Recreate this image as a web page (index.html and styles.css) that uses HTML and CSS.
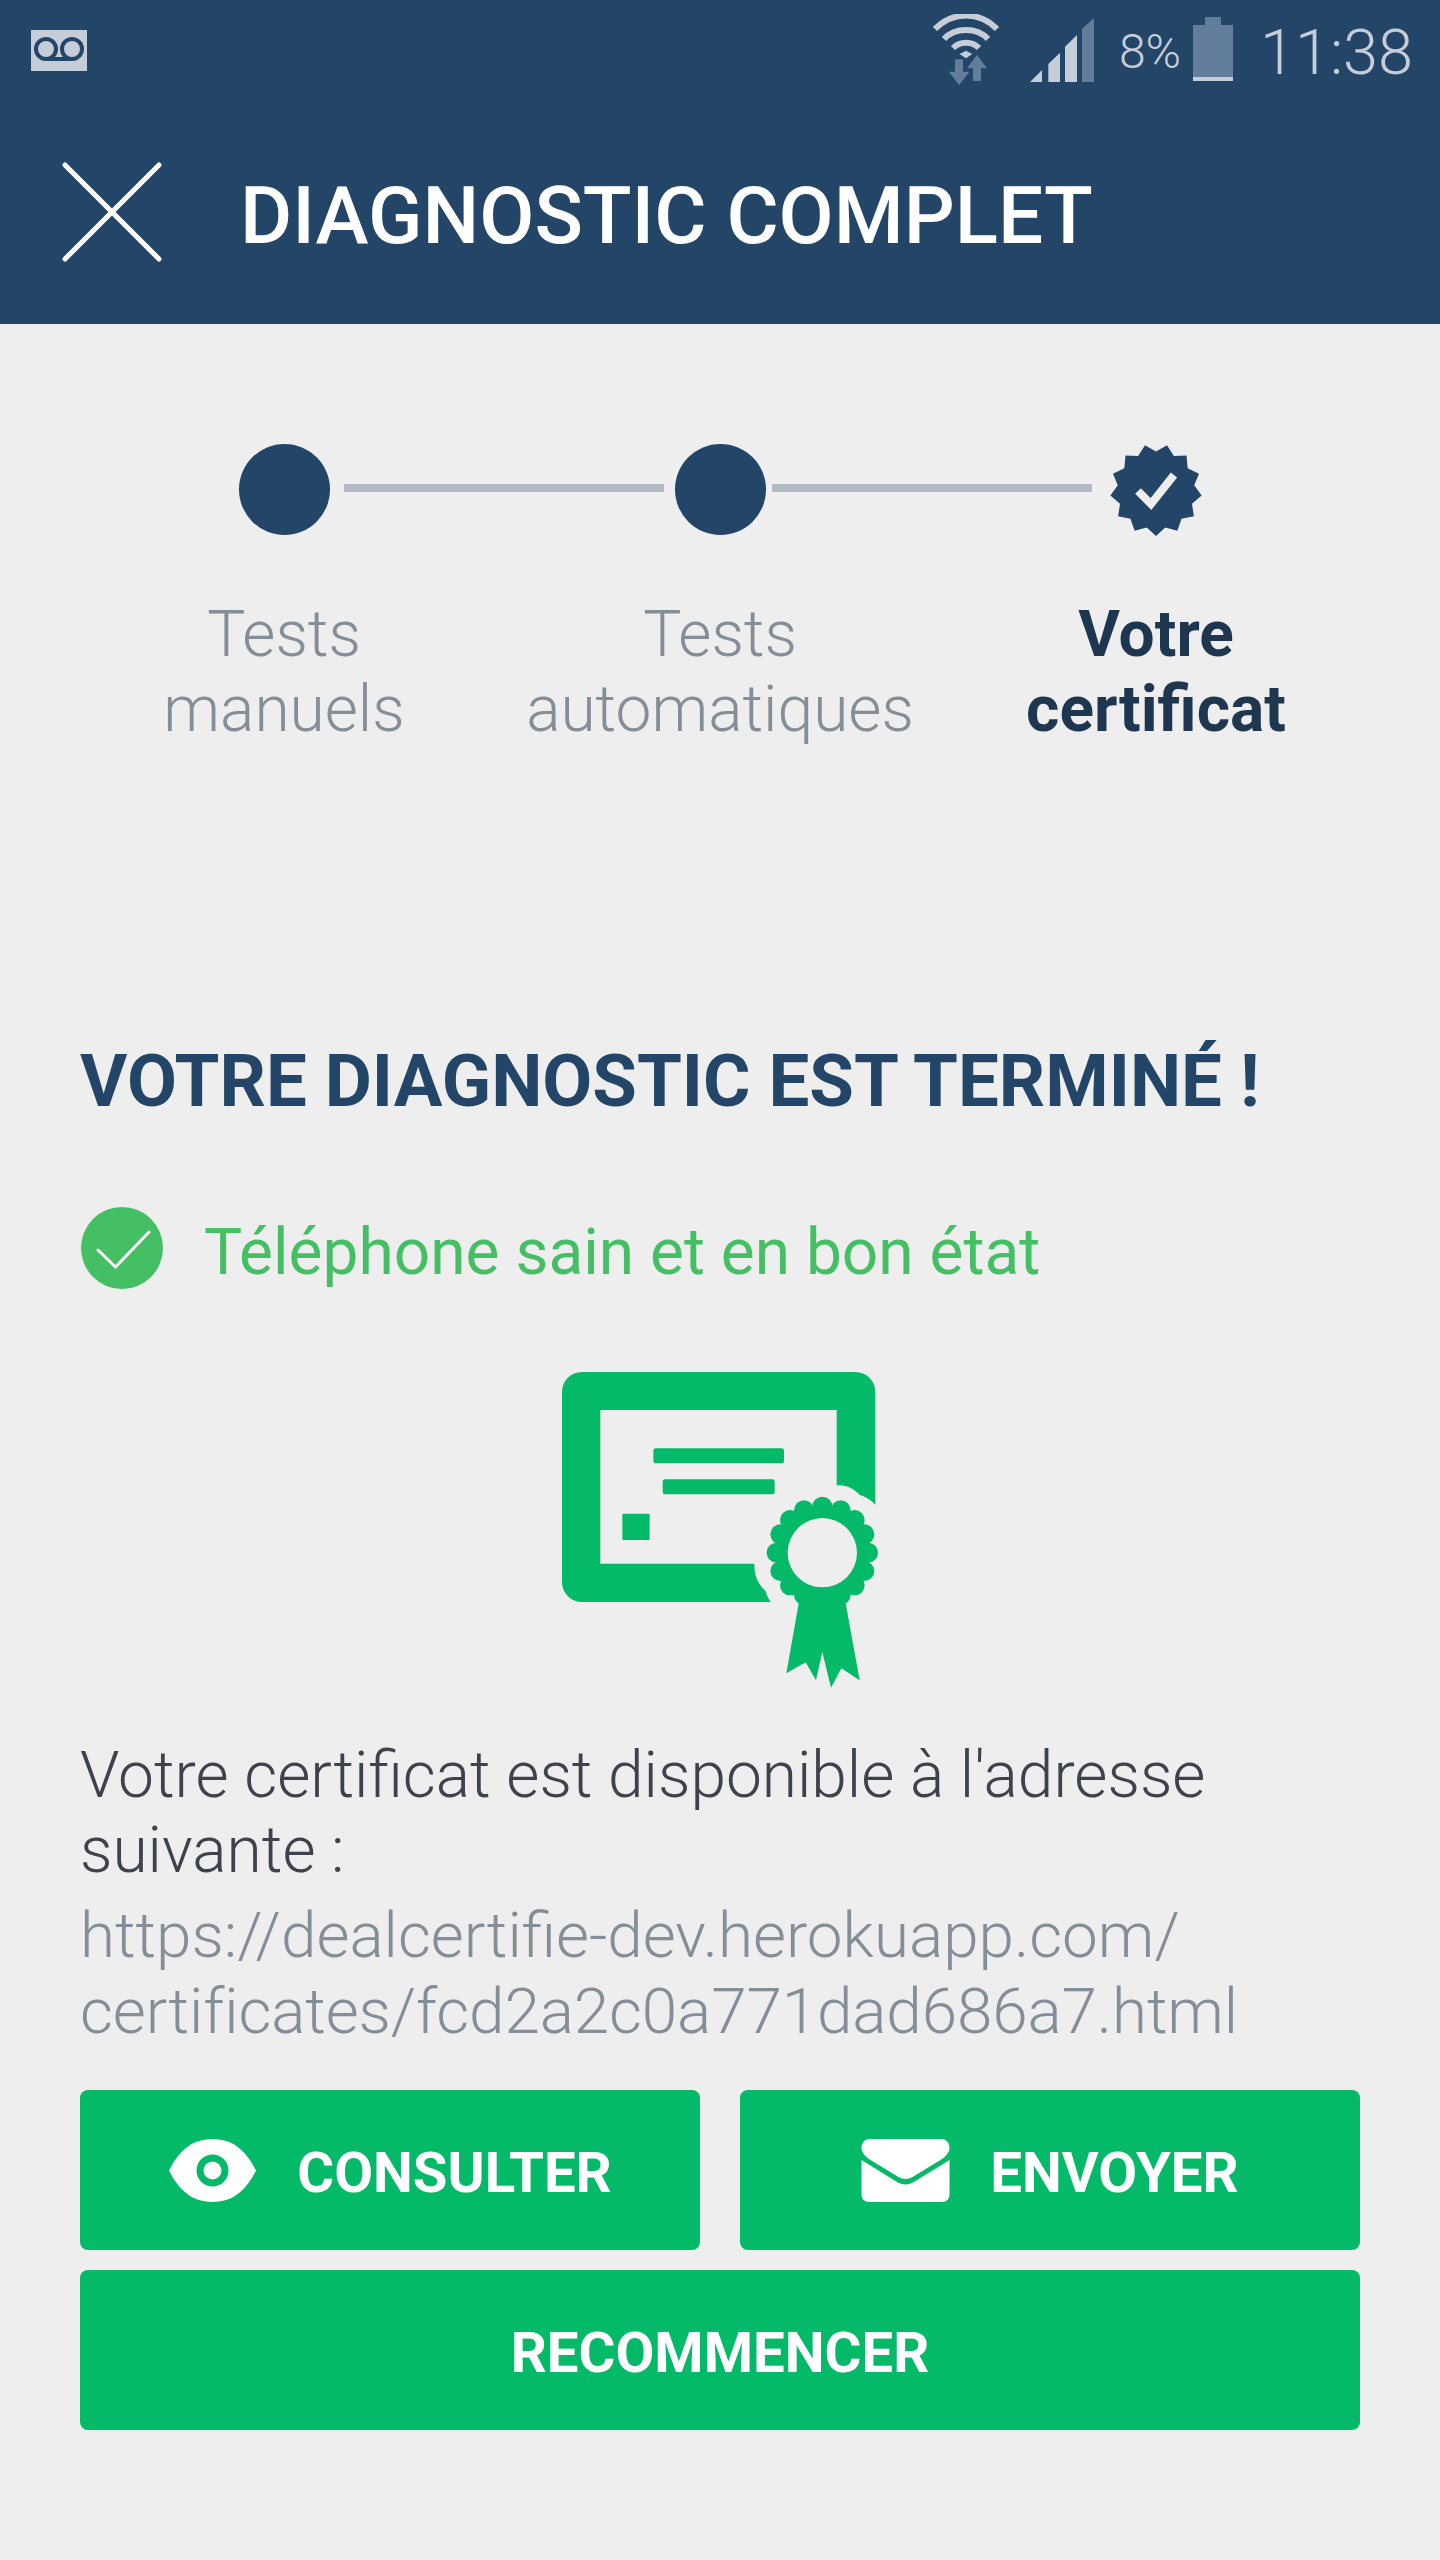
FILE: index.html
```html
<!DOCTYPE html>
<html lang="fr">
<head>
<meta charset="utf-8">
<title>Diagnostic complet</title>
<link rel="stylesheet" href="styles.css">
</head>
<body>
<header class="appbar">
  <div class="status">
    <svg class="vm" viewBox="0 0 56 41"><rect width="56" height="41" fill="#c5cdd9"/><g fill="none" stroke="#234567" stroke-width="4"><circle cx="15" cy="19" r="10"/><circle cx="41" cy="19" r="10"/><path d="M15 29h26"/></g></svg>
    <div class="status-right">
      <svg class="wifi" viewBox="0 0 66 71"><g fill="none" stroke="#c5cdd9" stroke-width="6"><path d="M2 15C20 -3 46 -3 64 15"/><path d="M11 25C22 13 44 13 55 25"/><path d="M20 34C27 27 39 27 46 34"/></g><path fill="#c5cdd9" d="M26.500 40 33 36.700 39.300 40 33 44.300z"/><path fill="#627e9c" d="M22 45.300h8V57.700h6.500L26 71 16 57.700h6zM44 41 54 54.300h-6V67h-8V54.300h-6z"/></svg>
      <svg class="signal" viewBox="0 0 64 64"><path fill="#c5cdd9" d="M0 64 12 52V64zM18.300 46 30 34.700V64H18.300zM35 28.700 47 17V64H35z"/><path fill="#627e9c" d="M52 11 64 0V64H52z"/></svg>
      <span class="pct">8%</span>
      <svg class="battery" viewBox="0 0 40 64"><path fill="#627e9c" d="M12 0h16v8h12v52H0V8h12z"/><rect y="60" width="40" height="4" fill="#c5cdd9"/></svg>
      <span class="time">11:38</span>
    </div>
  </div>
  <div class="toolbar">
    <svg class="close" viewBox="0 0 100 100"><path d="M3 3 97 97M97 3 3 97" fill="none" stroke="#fff" stroke-width="5" stroke-linecap="round"/></svg>
    <h1 class="title">DIAGNOSTIC COMPLET</h1>
  </div>
</header>
<main class="content">
  <div class="stepper">
    <span class="dot"></span>
    <span class="line line-first"></span>
    <span class="dot dot-mid"></span>
    <span class="line line-second"></span>
    <svg class="badge" viewBox="-46 -46 92 92"><polygon fill="#234567" points="0,46 9.21,37.38 21.38,40.73 25.53,28.82 37.86,26.13 36,13.65 45.67,5.54 38.22,-4.64 43.01,-16.31 31.69,-21.87 30.5,-34.43 17.89,-34.09 11,-44.67 0,-38.5 -11,-44.67 -17.89,-34.09 -30.5,-34.43 -31.69,-21.87 -43.01,-16.31 -38.22,-4.64 -45.67,5.54 -36,13.65 -37.86,26.13 -25.53,28.82 -21.38,40.73 -9.21,37.38"/><path d="M-18 1-5 14 18-15" fill="none" stroke="#eee" stroke-width="8"/></svg>
  </div>
  <div class="labels">
    <div class="label">Tests<br>manuels</div>
    <div class="label">Tests<br>automatiques</div>
    <div class="label label-active">Votre<br>certificat</div>
  </div>
  <h2 class="heading">VOTRE DIAGNOSTIC EST TERMINÉ !</h2>
  <div class="result">
    <svg class="check" viewBox="0 0 82 82"><circle cx="41" cy="41" r="41" fill="#45bf64"/><path d="M17 43 34.500 60 68 25" fill="none" stroke="#fff" stroke-width="3" stroke-linecap="round" stroke-linejoin="round"/></svg>
    <span class="result-text">Téléphone sain et en bon état</span>
  </div>
  <svg class="cert" viewBox="0 0 1200 1080">
    <g fill="#04b967">
      <path fill-rule="evenodd" d="M186 96H1006A60 60 0 0 1 1066 156V495C1055 482 1038 470 1020 466C1003 446 980 434 950 436V210H241V671H703C703 705 712 730 736 752C740 765 745 776 753 786H186A60 60 0 0 1 126 726V156A60 60 0 0 1 186 96Z"/>
      <rect x="400" y="325" width="392" height="45" rx="8"/>
      <rect x="428" y="418" width="336" height="45" rx="8"/>
      <rect x="307" y="521" width="82" height="79" rx="4"/>
      <path d="M845 740 799 1000 857 967 888 1021 907 936 933 1043 964 985 1019 1021 968 740Z"/>
      <circle cx="907" cy="638" r="138"/>
      <circle cx="907" cy="500" r="30"/><circle cx="852" cy="511" r="30"/><circle cx="810" cy="540" r="30"/><circle cx="781" cy="583" r="30"/><circle cx="770" cy="638" r="30"/><circle cx="781" cy="693" r="30"/><circle cx="810" cy="736" r="30"/><circle cx="852" cy="765" r="30"/><circle cx="962" cy="765" r="30"/><circle cx="1004" cy="736" r="30"/><circle cx="1033" cy="693" r="30"/><circle cx="1044" cy="638" r="30"/><circle cx="1033" cy="583" r="30"/><circle cx="1004" cy="540" r="30"/><circle cx="962" cy="511" r="30"/>
    </g>
    <circle cx="907" cy="638" r="104" fill="#eee"/>
  </svg>
  <p class="text">Votre certificat est disponible à l'adresse<br>suivante :</p>
  <p class="url">https://dealcertifie-dev.herokuapp.com/<br><span class="url-tail">certificates/fcd2a2c0a771dad686a7.html</span></p>
  <div class="actions">
    <div class="btn-row">
      <a class="btn">
        <svg class="btn-icon" viewBox="0 0 89 63"><path fill="#fff" d="M1 31.500C10 14 22 0 44.500 0 67 0 79 14 88 31.500 79 49 67 63 44.500 63 22 63 10 49 1 31.500Z"/><circle cx="44.500" cy="31.500" r="16" fill="#04b967"/><circle cx="44.500" cy="31.500" r="9" fill="#fff"/></svg>
        <span>CONSULTER</span>
      </a>
      <a class="btn">
        <svg class="btn-icon" viewBox="0 0 88 63"><path fill="#fff" d="M8 0H80C85 0 88 4 88 9 88 13 84 18 79 21L51 38C47 40.500 41 40.500 37 38L9 21C4 18 0 13 0 9 0 4 3 0 8 0Z"/><path fill="#fff" d="M0 21 34 42C40 46.500 48 46.500 54 42L88 21V55C88 60 85 63 80 63H8C3 63 0 60 0 55Z"/></svg>
        <span>ENVOYER</span>
      </a>
    </div>
    <a class="btn">RECOMMENCER</a>
  </div>
</main>
</body>
</html>
```

FILE: styles.css
```css
* { box-sizing: border-box; }
html, body { margin: 0; padding: 0; }
body {
  width: 1440px;
  min-height: 2560px;
  background: #eeeeee;
  font-family: Roboto, "Liberation Sans", sans-serif;
}
.appbar { background: #234567; height: 324px; }
.status {
  height: 100px;
  display: flex;
  align-items: flex-start;
  justify-content: space-between;
  padding: 0 27px 0 31px;
}
.vm { width: 56px; height: 41px; margin-top: 30px; }
.status-right { display: flex; align-items: flex-start; color: #c5cdd9; }
.wifi { width: 66px; height: 71px; margin-top: 14px; }
.signal { width: 64px; height: 64px; margin: 18px 0 0 31px; }
.pct { font-size: 48px; line-height: 56px; font-weight: 300; margin: 24px 0 0 25px; width: 74px; }
.battery { width: 40px; height: 64px; margin-top: 17px; }
.time { font-size: 63px; line-height: 78px; font-weight: 300; margin: 14px 0 0 27px; }
.toolbar { height: 224px; display: flex; align-items: center; padding-left: 62px; }
.close { width: 100px; height: 100px; }
.title {
  margin: 7px 0 0 78px;
  color: #fff;
  font-size: 80px;
  line-height: 96px;
  font-weight: 500;
}
.content { padding: 120px 80px 0; }
.stepper { display: flex; align-items: center; margin-left: 159px; height: 91px; }
.dot { width: 91px; height: 91px; border-radius: 50%; background: #234567; flex: none; }
.line { height: 8px; width: 320px; background: #b2bac5; flex: none; margin-top: -3px; }
.line-first { margin-left: 14px; margin-right: 11px; }
.line-second { margin-left: 6px; margin-right: 18px; }
.badge { width: 92px; height: 92px; flex: none; }
.labels {
  display: grid;
  grid-template-columns: repeat(3, 436px);
  justify-content: center;
  margin: 62px -100px 0;
}
.label {
  text-align: center;
  font-size: 64px;
  line-height: 75px;
  font-weight: 300;
  color: #848e98;
}
.label-active { font-weight: 700; color: #1f3650; }
.heading {
  margin: 295px 0 0;
  font-size: 72.5px;
  line-height: 80px;
  font-weight: 700;
  color: #234567;
}
.result { display: flex; align-items: center; margin: 85px 0 0 1px; height: 82px; }
.check { width: 82px; height: 82px; flex: none; }
.result-text { margin: 9px 0 0 41px; font-size: 64px; line-height: 82px; color: #45bf64; }
.cert { display: block; width: 400px; height: 360px; margin: 51px 0 0 440px; }
.text {
  margin: 38px 0 0;
  font-size: 64px;
  line-height: 75px;
  font-weight: 300;
  color: #3d424c;
}
.url {
  margin: 10px 0 0;
  font-size: 63.8px;
  line-height: 76px;
  font-weight: 300;
  color: #848e98;
}
.url-tail { letter-spacing: -0.12px; }
.actions { display: flex; flex-direction: column; gap: 20px; margin-top: 40px; }
.btn-row { display: flex; gap: 40px; }
.btn-row .btn { flex: 1; }
.btn {
  height: 160px;
  display: flex;
  align-items: center;
  justify-content: center;
  gap: 40px;
  padding-top: 6px;
  background: #04b967;
  border-radius: 8px;
  color: #fff;
  font-size: 56.4px;
  font-weight: 700;
}
.btn-icon { width: 89px; height: 63px; flex: none; margin-top: -6px; }
```
